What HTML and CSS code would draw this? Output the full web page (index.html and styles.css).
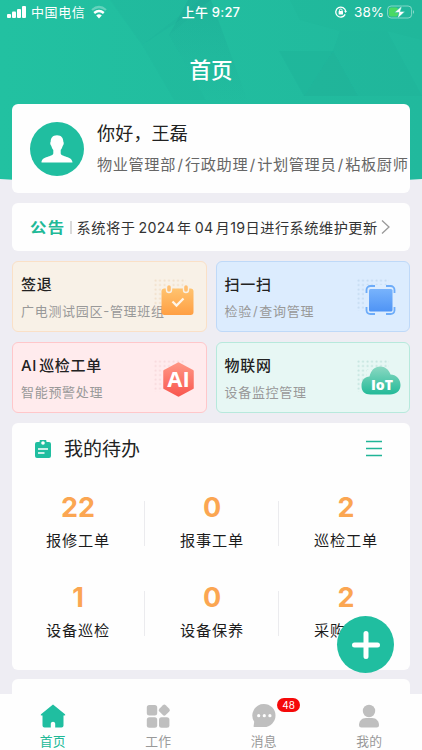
FILE: index.html
```html
<!DOCTYPE html>
<html lang="zh-CN">
<head>
<meta charset="utf-8">
<meta name="viewport" content="width=device-width, initial-scale=1">
<title>首页</title>
<link rel="stylesheet" href="styles.css">
</head>
<body>
<div class="screen">
  <svg class="hero" viewBox="0 0 422 190" aria-hidden="true">
    <defs>
      <linearGradient id="h" x1="0" y1="0" x2="1" y2="0"><stop offset="0" stop-color="#22c1a1"/><stop offset="1" stop-color="#21b99d"/></linearGradient>
      <linearGradient id="s" x1="0" y1="0" x2="0" y2="1"><stop offset="0" stop-color="#168f87" stop-opacity=".2"/><stop offset="1" stop-color="#168f87" stop-opacity="0"/></linearGradient>
    </defs>
    <path d="M0 0H422V179Q211 193 0 179Z" fill="url(#h)"/>
    <path d="M110 0H211L142 45Z" fill="#168f87" opacity=".06"/>
    <path d="M142 45L200 0H211L169 35 206 100H174Z" fill="#168f87" opacity=".05"/>
    <path d="M169 35L188 0H211L249 104H208Z" fill="url(#s)"/>
    <path d="M279 51H333L304 96Z" fill="#168f87" opacity=".1"/>
    <path d="M333 51L358 96H304Z" fill="#168f87" opacity=".12"/>
    <path d="M340 31H387L422 96H358L333 51Z" fill="#168f87" opacity=".06"/>
    <path d="M290 0H422V40L387 31H340L300 20Z" fill="#168f87" opacity=".04"/>
  </svg>

  <header class="status">
    <div class="status-left">
      <svg width="20" height="14" viewBox="0 0 20 14" fill="#fff"><rect x="0" y="9" width="4" height="4" rx="1"/><rect x="5" y="6.500" width="4" height="6.500" rx="1"/><rect x="10" y="4" width="4" height="9" rx="1"/><rect x="15" y="1" width="4" height="12" rx="1"/></svg>
      <span class="carrier">中国电信</span>
      <svg class="wifi" width="16" height="14" viewBox="0 0 16 14" fill="none" stroke="#fff"><path d="M1 5Q8-1 15 5" stroke-width="2.200" opacity=".3"/><path d="M3.200 8Q8 3.800 12.800 8" stroke-width="2.400"/><path d="M5.200 10.400Q8 8 10.800 10.400L8 13.400Z" fill="#fff" stroke="none"/></svg>
    </div>
    <div class="clock">上午 9:27</div>
    <div class="status-right">
      <svg width="12" height="12" viewBox="0 0 12 12" fill="none" stroke="#fff" stroke-width="1.300"><path d="M10.200 8.400A5 5 0 1 1 10.700 5.200"/><path d="M9.200 5H12L10.600 7Z" fill="#fff" stroke="none"/><rect x="3.600" y="5" width="4.400" height="3.500" rx=".5" fill="#fff" stroke="none"/><path d="M4.500 5.300V4.300A1.300 1.300 0 0 1 7.100 4.300V5.300" stroke-width="1"/></svg>
      <span class="percent">38%</span>
      <svg width="28" height="14" viewBox="0 0 28 14"><rect x=".6" y="1" width="24" height="12" rx="3.500" fill="none" stroke="#fff" stroke-opacity=".45"/><rect x="2" y="2.500" width="9" height="9" rx="2" fill="#4bd964"/><path d="M26 5Q28 7 26 9Z" fill="#fff" opacity=".5"/><path d="M15 .8L7.500 7.600H12L10.500 13.400 18 6.400H13.300Z" fill="#fff" stroke="#25bb9e" stroke-width=".5"/></svg>
    </div>
  </header>
  <h1 class="title">首页</h1>

  <main class="content">
    <section class="card profile">
      <svg class="avatar" viewBox="0 0 54 54"><circle cx="27" cy="27" r="27" fill="#20bea0"/><path d="M27 13.200C31.500 13.200 33.300 16.200 33.300 19.500C34.300 21 33.500 23 32.800 23.700C32 26 31.500 27 30.700 28V31.500C31.200 35 42.500 34 42.500 40.500H11.500C11.500 34 22.800 35 23.300 31.500V28C22.500 27 22 26 21.200 23.700C20.500 23 19.700 21 20.700 19.500C20.700 16.200 22.500 13.200 27 13.200Z" fill="#fff"/></svg>
      <div class="who">
        <div class="hello">你好，王磊</div>
        <div class="roles">物业管理部<i>/</i>行政助理<i>/</i>计划管理员<i>/</i>粘板厨师</div>
      </div>
    </section>

    <section class="card notice">
      <b class="notice-tag">公告</b>
      <span class="bar"></span>
      <span class="notice-text">系统将于<i>2024</i>年<i>04</i>月<i class="tight">19</i>日进行系统维护更新</span>
      <svg width="10" height="16" viewBox="0 0 10 16" fill="none" stroke="#999" stroke-width="1.300"><path d="M1 1.500L8 8 1 14.500"/></svg>
    </section>

    <section class="tiles">
      <div class="tile orange">
        <div class="tile-title">签退</div><div class="tile-sub">广电测试园区-管理班组</div>
        <svg class="tile-icon" viewBox="0 0 44 44">
          <defs><linearGradient id="o" x2="0" y2="1"><stop stop-color="#ffc36f"/><stop offset="1" stop-color="#ff9f43"/></linearGradient><pattern id="do" width="4.500" height="4.500" patternUnits="userSpaceOnUse"><circle cx="1.500" cy="1.500" r="1.050" fill="#f1dfca"/></pattern></defs>
          <path d="M0 0H32V10H10V32H0Z" fill="url(#do)"/><rect x="7.500" y="9.500" width="32" height="26.500" rx="3" fill="url(#o)"/><g fill="#ffbe70" stroke="#f8f1e7" stroke-width="1.400"><rect x="12.500" y="5.500" width="5" height="8" rx="2.500"/><rect x="29.500" y="5.500" width="5" height="8" rx="2.500"/></g><path d="M18.500 22.500L22.500 26.500 29.500 19.500" fill="none" stroke="#fff5e8" stroke-width="2.300"/>
        </svg>
      </div>
      <div class="tile blue">
        <div class="tile-title">扫一扫</div><div class="tile-sub">检验<i>/</i>查询管理</div>
        <svg class="tile-icon" viewBox="0 0 44 44">
          <defs><linearGradient id="b" x2="0" y2="1"><stop stop-color="#78b3fc"/><stop offset="1" stop-color="#4f94f5"/></linearGradient><pattern id="db" width="4.500" height="4.500" patternUnits="userSpaceOnUse"><circle cx="1.500" cy="1.500" r="1.050" fill="#c5dbf1"/></pattern></defs>
          <path d="M0 0H32V6H7V32H0Z" fill="url(#db)"/><rect x="12" y="10" width="23.500" height="22.500" rx="1.500" fill="url(#b)"/><path d="M9.500 14V11A4 4 0 0 1 13.500 7H18M29 7H33.500A4 4 0 0 1 37.500 11V14M37.500 28V31.500A4 4 0 0 1 33.500 35H29M18 35H13.500A4 4 0 0 1 9.500 31.500V28" fill="none" stroke="#6dacf9" stroke-width="1.800"/>
        </svg>
      </div>
      <div class="tile red">
        <div class="tile-title"><i class="ai">AI</i>巡检工单</div><div class="tile-sub">智能预警处理</div>
        <svg class="tile-icon" viewBox="0 0 44 44">
          <defs><linearGradient id="r" x2="0" y2="1"><stop stop-color="#ff9684"/><stop offset="1" stop-color="#f95850"/></linearGradient><pattern id="dr" width="4.500" height="4.500" patternUnits="userSpaceOnUse"><circle cx="1.500" cy="1.500" r="1.050" fill="#f7dadd"/></pattern></defs>
          <path d="M0 0H32V10H10V32H0Z" fill="url(#dr)"/><path d="M24.500 3.500L38.500 11V28L24.500 35.500 10.500 28V11Z" fill="url(#r)" stroke="url(#r)" stroke-width="2.500" stroke-linejoin="round"/><text x="24.500" y="27" text-anchor="middle" class="ai-logo">AI</text>
        </svg>
      </div>
      <div class="tile green">
        <div class="tile-title">物联网</div><div class="tile-sub">设备监控管理</div>
        <svg class="tile-icon" viewBox="0 0 44 44">
          <defs><linearGradient id="g" x2="0" y2="1"><stop stop-color="#8bd8c2"/><stop offset="1" stop-color="#23ba98"/></linearGradient><pattern id="dg" width="4.500" height="4.500" patternUnits="userSpaceOnUse"><circle cx="1.500" cy="1.500" r="1.050" fill="#c5e5df"/></pattern></defs>
          <path d="M0 0H32V10H10V32H0Z" fill="url(#dg)"/><path d="M13.500 34.500C7.500 34.500 4.500 31 4.500 26C4.500 20 8 16.500 12.500 16.500C14 10 18 6.500 23 6.500C28 6.500 32 9.500 33.500 14.500C39 14.500 43.500 19 43.500 25C43.500 31 39 34.500 33 34.500Z" fill="url(#g)"/><text x="25" y="29.500" text-anchor="middle" class="iot-logo">IoT</text>
        </svg>
      </div>
    </section>

    <section class="card todo">
      <div class="todo-head">
        <svg width="16" height="18" viewBox="0 0 16 18"><path d="M2 2H4.500A3.500 3.500 0 0 1 11.500 2H14A2 2 0 0 1 16 4V16A2 2 0 0 1 14 18H2A2 2 0 0 1 0 16V4A2 2 0 0 1 2 2Z" fill="#20bea0"/><circle cx="8" cy="3" r="1.800" fill="#fff"/><path d="M3 9H13M3 13H9.500" stroke="#fff" stroke-width="1.500"/></svg>
        <h2>我的待办</h2>
        <svg class="menu" width="16" height="17" viewBox="0 0 16 17"><path d="M0 1.500H16M0 8.500H16M0 15.500H16" stroke="#20b597" stroke-width="1.500"/></svg>
      </div>
      <div class="stats">
        <div class="stat"><b>22</b><span>报修工单</span></div>
        <div class="stat"><b>0</b><span>报事工单</span></div>
        <div class="stat"><b>2</b><span>巡检工单</span></div>
        <div class="stat"><b>1</b><span>设备巡检</span></div>
        <div class="stat"><b>0</b><span>设备保养</span></div>
        <div class="stat"><b>2</b><span>采购工单</span></div>
      </div>
    </section>
    <section class="card next"></section>
  </main>

  <button class="fab" aria-label="添加"><svg width="28" height="28" viewBox="0 0 28 28"><path d="M14 2.500V25.500M2.500 14H25.500" stroke="#fff" stroke-width="5" stroke-linecap="round"/></svg></button>

  <nav class="tabs">
    <div class="tab active"><svg viewBox="0 0 26 26"><path d="M13 1.500L25 11.200Q26 12.500 24.200 12.500H23.500V22.500Q23.500 24.500 21.500 24.500H15.200V20.500Q15 18.700 13 18.700T10.800 20.500V24.500H4.500Q2.500 24.500 2.500 22.500V12.500H1.800Q0 12.500 1 11.200Z"/></svg><span>首页</span></div>
    <div class="tab"><svg viewBox="0 0 26 26"><rect x="1.800" y="2" width="10.400" height="10.400" rx="2.500"/><rect x="1.800" y="14.300" width="10.400" height="10.400" rx="2.500"/><rect x="14" y="14.300" width="10.400" height="10.400" rx="2.500"/><rect x="14.800" y="2.600" width="9" height="9" rx="2" transform="rotate(45 19.300 7.100)"/></svg><span>工作</span></div>
    <div class="tab"><svg viewBox="0 0 26 26"><path d="M13 1A11.500 11.500 0 0 1 13 24H3.500Q2.300 24 2.700 22.500L3.200 18.700A11.500 11.500 0 0 1 13 1Z"/><g fill="#fff"><circle cx="7.700" cy="12.700" r="1.600"/><circle cx="13.300" cy="12.700" r="1.600"/><circle cx="18.900" cy="12.700" r="1.600"/></g></svg><em class="badge">48</em><span>消息</span></div>
    <div class="tab"><svg viewBox="0 0 26 26"><circle cx="13" cy="8" r="6.200"/><path d="M10 15H16C20.500 15 23 18.500 23 22Q23 24.500 20.500 24.500H5.500Q3 24.500 3 22C3 18.500 5.500 15 10 15Z"/></svg><span>我的</span></div>
  </nav>
</div>
</body>
</html>
```
FILE: styles.css
```css
* { box-sizing: border-box; }
body { margin: 0; font-family: Inter, "Noto Sans CJK SC", sans-serif; color: #222; }
i, em { font-style: normal; }
svg { display: block; flex: none; }
.screen { position: relative; width: 422px; height: 750px; overflow: hidden; background: #eeedf3; display: flex; flex-direction: column; }
.hero { position: absolute; left: 0; top: 0; width: 422px; height: 190px; }
.status { position: relative; height: 24px; flex: none; display: grid; grid-template-columns: 1fr auto 1fr; align-items: center; color: #fff; padding: 0 7px 0 7px; font-size: 13px; line-height: 24px; }
.status-left, .status-right { display: flex; align-items: center; }
.status-right { justify-content: flex-end; }
.carrier { margin-left: 4px; letter-spacing: .6px; }
.wifi { margin-left: 6px; }
.clock { font-weight: 500; letter-spacing: .2px; }
.percent { margin: 0 3px 0 7px; font-size: 13.5px; }
.title { position: relative; margin: 0; height: 80px; flex: none; text-align: center; color: #fff; font-size: 21.5px; line-height: 92px; font-weight: 500; }
.content { position: relative; flex: 1; min-height: 0; overflow: hidden; padding: 0 12px; display: flex; flex-direction: column; gap: 10px; }
.card { background: #fefefe; border-radius: 6px; flex: none; }
.profile { height: 89px; padding: 17px 0 0 18px; display: flex; gap: 13px; }
.avatar { width: 54px; height: 54px; margin-top: 1px; }
.who { white-space: nowrap; }
.hello { font-size: 18px; line-height: 26px; letter-spacing: .2px; }
.roles { font-size: 15.2px; line-height: 22px; margin-top: 7px; color: #666; letter-spacing: .6px; }
.roles i { padding: 0 1.5px; }
.notice { height: 48px; padding: 0 19px 0 18px; display: flex; align-items: center; }
.notice-tag { color: #20b997; font-size: 16.5px; font-weight: 700; letter-spacing: 1.3px; transform: scaleY(.87); transform-origin: center; }
.bar { width: 2px; height: 13px; background: #d9d9d9; margin: 0 5px 0 4px; }
.notice-text { flex: 1; white-space: nowrap; font-size: 14.2px; letter-spacing: .5px; color: #333; }
.notice-text i { margin: 0 2px 0 3px; letter-spacing: .35px; }
.notice-text .tight { margin: 0; }
.tiles { display: grid; grid-template-columns: 1fr 1fr; grid-template-rows: 71px 71px; column-gap: 9px; row-gap: 10px; flex: none; }
.tile { position: relative; border: 1px solid; border-radius: 6px; padding: 11px 8px; white-space: nowrap; }
.orange { background: #f8f1e7; border-color: #fae0c7; }
.blue { background: #dcecfe; border-color: #bfd9f8; }
.red { background: #ffebed; border-color: #ffc7ca; }
.green { background: #e7f7f4; border-color: #b7e9dc; }
.tile-title { font-size: 15px; line-height: 24px; font-weight: 500; letter-spacing: .7px; }
.ai { margin-right: 2px; }
.tile-sub { font-size: 13px; line-height: 20px; margin-top: 4px; color: #999; letter-spacing: .7px; }
.tile-sub i { padding: 0 1px; }
.tile-icon { position: absolute; right: 8px; top: 17px; width: 44px; height: 44px; }
.ai-logo { font: 700 22px "Open Sans", sans-serif; fill: #fff; }
.iot-logo { font: 800 14px "Open Sans", sans-serif; fill: #fff; }
.todo { height: 247px; }
.todo-head { height: 52px; padding: 0 28px 0 23px; display: flex; align-items: center; }
.todo-head h2 { margin: 1px auto 0 13px; font-size: 19px; font-weight: 400; line-height: 28px; }
.menu { margin-top: -2px; }
.stats { display: grid; grid-template-columns: repeat(3, 134px); grid-auto-rows: 90px; margin-left: -1px; }
.stat { position: relative; display: flex; flex-direction: column; align-items: center; padding-top: 16px; }
.stat:not(:nth-child(3n))::after { content: ""; position: absolute; right: 0; top: 26px; width: 1px; height: 45px; background: #ebebee; }
.stat b { font-size: 27px; line-height: 34px; font-weight: 700; color: #fba652; }
.stat span { font-size: 15.2px; line-height: 24px; margin-top: 4px; letter-spacing: .8px; color: #1c1c1c; }
.next { height: 60px; margin-top: -1px; }
.fab { position: absolute; left: 337px; top: 616px; width: 57px; height: 57px; border: 0; padding: 0; border-radius: 50%; background: #20bea0; display: flex; align-items: center; justify-content: center; }
.tabs { position: relative; height: 56px; flex: none; background: #fefefe; display: grid; grid-template-columns: repeat(4, 1fr); }
.tab { position: relative; display: flex; flex-direction: column; align-items: center; padding-top: 9px; color: #999; }
.tab svg { width: 26px; height: 26px; fill: #bfbfbf; }
.tab span { font-size: 12.800px; line-height: 18px; margin-top: 4px; letter-spacing: .3px; }
.tab.active svg { fill: #20bea0; }
.tab.active span { color: #20b997; }
.badge { position: absolute; left: 66px; top: 4px; width: 23px; height: 14px; border-radius: 7px; background: #f50a0a; color: #fff; font-size: 10px; line-height: 14px; text-align: center; }
```
